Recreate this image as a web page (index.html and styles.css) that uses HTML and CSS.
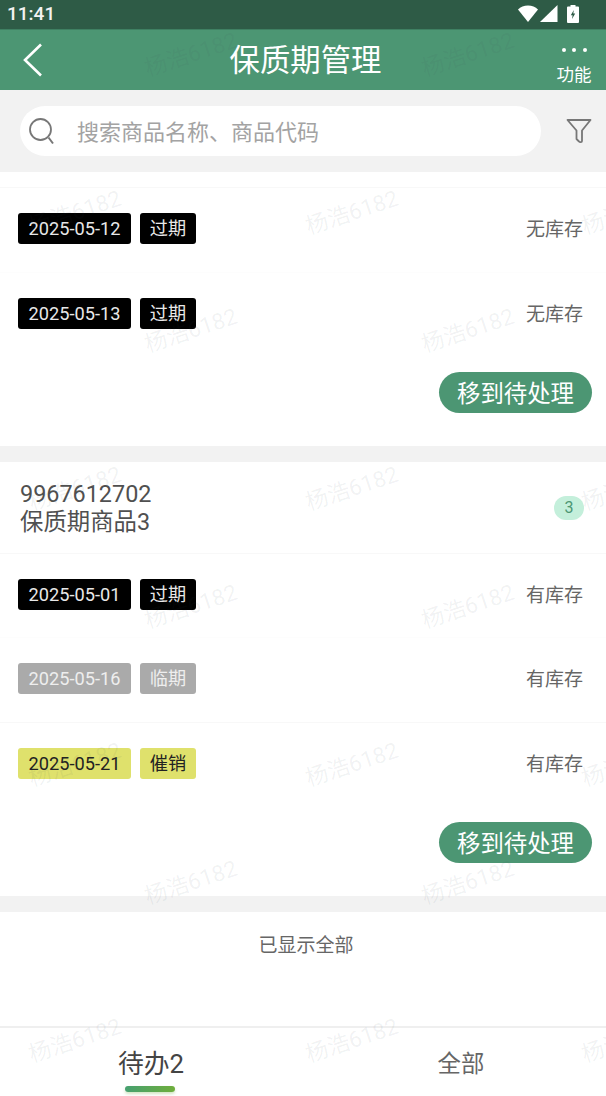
FILE: index.html
```html
<!DOCTYPE html>
<html lang="zh-CN">
<head>
  <meta charset="UTF-8">
  <meta name="viewport" content="width=device-width, initial-scale=1.0">
  <title>保质期管理</title>
  <link rel="stylesheet" href="styles.css">
</head>
<body>
  <div class="status-bar">
    <span class="time">11:41</span>
    <div class="status-icons">
      <svg width="20" height="17" viewBox="0 0 20 17"><path d="M0 4.500C2.600 1.800 6 .5 10 .5s7.400 1.300 10 4L10 17z" fill="#fff"/></svg>
      <svg width="18" height="17" viewBox="0 0 18 17"><path d="M17.500 0v17H0z" fill="#fff"/></svg>
      <svg class="battery" width="12" height="18" viewBox="0 0 12 18"><path d="M3.500 0h5v1.500H11a1 1 0 0 1 1 1V17a1 1 0 0 1-1 1H1a1 1 0 0 1-1-1V2.500a1 1 0 0 1 1-1h2.500z" fill="#fff"/><path d="M6.800 5 3.800 10.200h1.800L5 14l3.200-5.400H6.300z" fill="#2e5b46"/></svg>
    </div>
  </div>

  <header class="title-bar">
    <svg class="back" width="20" height="34" viewBox="0 0 20 34"><path d="M18 1.500 2 17l16 15.500" fill="none" stroke="#fff" stroke-width="2.600"/></svg>
    <h1>保质期管理</h1>
    <div class="more">
      <div class="dots"><i></i><i></i><i></i></div>
      <span>功能</span>
    </div>
  </header>

  <div class="search-area">
    <div class="search-box">
      <svg width="28" height="30" viewBox="0 0 28 30"><circle cx="11.500" cy="14.500" r="10.500" fill="none" stroke="#777" stroke-width="1.800"/><path d="M19.500 22.500l4.500 6" stroke="#777" stroke-width="2" fill="none"/></svg>
      <span>搜索商品名称、商品代码</span>
    </div>
    <svg class="filter" width="26" height="26" viewBox="0 0 26 26"><path d="M1.500 2h23L16 12.500V23c0 1.500-2.200 1.500-3 .5l-2.500-2.500v-8.500z" fill="none" stroke="#777" stroke-width="1.800" stroke-linejoin="round"/></svg>
  </div>

  <section class="card first">
    <div class="batch ruled">
      <div class="tags"><span class="tag black">2025-05-12</span><span class="tag black">过期</span></div>
      <span class="stock">无库存</span>
    </div>
    <div class="batch">
      <div class="tags"><span class="tag black">2025-05-13</span><span class="tag black">过期</span></div>
      <span class="stock">无库存</span>
    </div>
    <div class="actions"><button>移到待处理</button></div>
  </section>

  <section class="card">
    <div class="product">
      <div class="product-name">9967612702<br>保质期商品3</div>
      <span class="count">3</span>
    </div>
    <div class="batch ruled">
      <div class="tags"><span class="tag black">2025-05-01</span><span class="tag black">过期</span></div>
      <span class="stock">有库存</span>
    </div>
    <div class="batch">
      <div class="tags"><span class="tag grey">2025-05-16</span><span class="tag grey">临期</span></div>
      <span class="stock">有库存</span>
    </div>
    <div class="batch ruled">
      <div class="tags"><span class="tag yellow">2025-05-21</span><span class="tag yellow">催销</span></div>
      <span class="stock">有库存</span>
    </div>
    <div class="actions"><button>移到待处理</button></div>
  </section>

  <div class="list-end">已显示全部</div>

  <nav class="tabs">
    <div class="tab active">待办2</div>
    <div class="tab">全部</div>
  </nav>

  <!-- staggered watermark rows laid over the whole page -->
  <div class="watermark">
    <div class="wm-row"><span>杨浩6182</span><span>杨浩6182</span></div>
    <div class="wm-row"><span>杨浩6182</span><span>杨浩6182</span><span>杨浩6182</span></div>
    <div class="wm-row"><span>杨浩6182</span><span>杨浩6182</span></div>
    <div class="wm-row"><span>杨浩6182</span><span>杨浩6182</span><span>杨浩6182</span></div>
    <div class="wm-row"><span>杨浩6182</span><span>杨浩6182</span></div>
    <div class="wm-row"><span>杨浩6182</span><span>杨浩6182</span><span>杨浩6182</span></div>
    <div class="wm-row"><span>杨浩6182</span><span>杨浩6182</span></div>
    <div class="wm-row"><span>杨浩6182</span><span>杨浩6182</span><span>杨浩6182</span></div>
  </div>
</body>
</html>
```

FILE: styles.css
```css
* {
  box-sizing: border-box;
}
html, body {
  margin: 0;
  height: 1096px;
  overflow: hidden;
}
body {
  position: relative;
  font-family: Roboto, "Noto Sans CJK SC", sans-serif;
  background-color: #f2f2f2;
  color: #444;
}

.status-bar {
  height: 29px;
  background-color: #2e5b46;
  color: #f2f2f2;
  display: flex;
  justify-content: space-between;
  align-items: center;
  padding: 0 27px 2px 7px;
}
.time {
  font-size: 19px;
  font-weight: 500;
}
.status-icons {
  display: flex;
  align-items: center;
  gap: 2px;
}
.status-icons .battery {
  margin-left: 7px;
}

.title-bar {
  height: 61px;
  background-color: #4c9673;
  border-top: 1px solid #3f8062;
  display: flex;
  align-items: center;
  justify-content: space-between;
  padding: 0 14px 0 23px;
  color: #fff;
}
.title-bar h1 {
  margin: 0;
  font-size: 30.400px;
  font-weight: 400;
  position: relative;
  left: 6px;
  top: -2px;
}
.more {
  width: 36px;
  display: flex;
  flex-direction: column;
  align-items: center;
  font-size: 17.500px;
  line-height: 24px;
  padding-top: 15px;
}
.dots {
  display: flex;
  gap: 6.500px;
  height: 15px;
}
.dots i {
  width: 4px;
  height: 4px;
  border-radius: 50%;
  background-color: #fff;
}

.search-area {
  height: 82px;
  padding: 16px 14px 0 20px;
  display: flex;
  align-items: flex-start;
  justify-content: space-between;
}
.search-box {
  width: 521px;
  height: 50px;
  border-radius: 25px;
  background-color: #fff;
  display: flex;
  align-items: center;
  padding: 0 0 2px 9px;
  gap: 20px;
  font-size: 22px;
  color: #a3a3a3;
}
.filter {
  margin-top: 12px;
}

.card {
  background-color: #fff;
  margin-bottom: 16px;
}
.card.first {
  height: 274px;
  padding-top: 15px;
}

.product {
  height: 90.500px;
  padding: 1px 22px 0 20px;
  display: flex;
  align-items: center;
  justify-content: space-between;
  font-size: 23.400px;
  line-height: 28px;
  color: #505050;
}
.count {
  width: 30px;
  height: 24px;
  border-radius: 12px;
  background-color: #c4efdb;
  color: #4c9673;
  font-size: 16px;
  display: flex;
  align-items: center;
  justify-content: center;
}

.batch {
  height: 84.500px;
  border-top: 1px solid #fdfdfd;
  padding: 0 22px 2px 18px;
  display: flex;
  align-items: center;
  justify-content: space-between;
}
.batch.ruled {
  border-top-color: #f8f8f8;
}
.tags {
  display: flex;
  gap: 9px;
}
.tag {
  height: 31px;
  width: 56px;
  text-align: center;
  border-radius: 3px;
  font-size: 18.200px;
  line-height: 32px;
}
.tag:first-child {
  width: 113px;
}
.tag.black {
  background-color: #000;
  color: #e8e8e8;
}
.tag.grey {
  background-color: #aaa;
  color: #eee;
}
.tag.yellow {
  background-color: #dfe16c;
  color: #222;
}
.stock {
  font-size: 19px;
  color: #666;
  margin-bottom: 2px;
  position: relative;
  left: -1px;
}

.actions {
  display: flex;
  justify-content: flex-end;
  padding: 16px 14px 33px 0;
}
.actions button {
  width: 153px;
  height: 41px;
  border: none;
  padding: 0 0 2px;
  border-radius: 21px;
  background-color: #4c9673;
  color: #fff;
  font-family: inherit;
  font-size: 23.400px;
}

.list-end {
  height: 114px;
  background-color: #fff;
  padding: 21px 0 0 6px;
  text-align: center;
  font-size: 19px;
  line-height: 26px;
  color: #666;
}

.tabs {
  height: 70px;
  background-color: #fff;
  border-top: 2px solid #efefef;
  display: flex;
}
.tab {
  width: 310px;
  text-align: center;
  font-size: 23.400px;
  line-height: 72px;
  color: #666;
  padding-right: 8px;
  position: relative;
}
.tab + .tab {
  width: 296px;
  padding: 0 0 0 6px;
}
.tab.active {
  font-size: 25.800px;
  color: #444;
}
/* green stroke under the current tab */
.tab.active::after {
  content: "";
  position: absolute;
  left: 125px;
  top: 58px;
  width: 50px;
  height: 6px;
  border-radius: 3px;
  background: linear-gradient(90deg, #46a070, #6fae3c);
  box-shadow: 0 2px 3px rgba(110, 170, 60, 0.3);
}

.watermark {
  position: absolute;
  left: 0;
  top: 39px;
  width: 606px;
  pointer-events: none;
}
.wm-row {
  height: 158px;
  display: flex;
  gap: 181px;
  padding-left: 143px;
}
.wm-row:nth-child(even) {
  height: 118px;
  padding-left: 27px;
}
.wm-row span {
  flex: none;
  height: 30px;
  font-size: 22.500px;
  line-height: 30px;
  white-space: nowrap;
  color: rgba(60, 70, 90, 0.07);
  transform: rotate(-18deg);
}
```
